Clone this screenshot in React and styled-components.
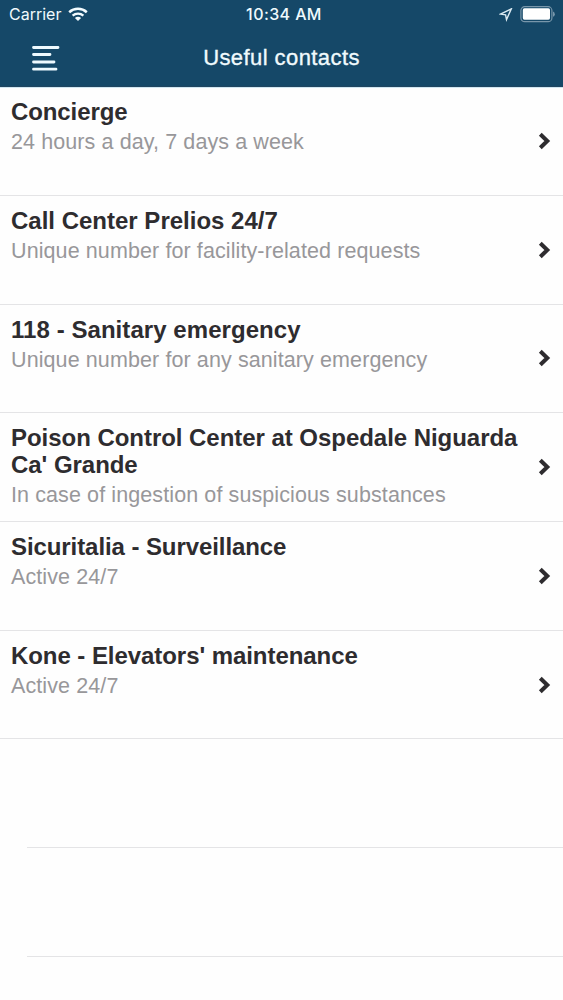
import React from "react";
import styled, { createGlobalStyle } from "styled-components";

const GlobalStyle = createGlobalStyle`
  body {
    margin: 0;
    background: #fefefe;
  }
`;

// ----- Styled Components -----
const Screen = styled.div`
  width: 563px;
  height: 1000px;
  overflow: hidden;
  display: flex;
  flex-direction: column;
  background: #fefefe;
  font-family: "Liberation Sans", Arial, sans-serif;
`;

const Header = styled.header`
  flex: none;
  height: 87px;
  box-sizing: border-box;
  background: #154868;
  border-bottom: 1px solid #204560;
  color: #fff;
`;

const StatusBar = styled.div`
  display: grid;
  grid-template-columns: 1fr auto 1fr;
  align-items: center;
  height: 29px;
  padding: 0 8px 0 9px;
  font-family: Inter, sans-serif;
  font-size: 16px;
  line-height: 29px;
  color: #f0fafd;
`;

const StatusGroup = styled.div`
  display: flex;
  align-items: center;
  gap: 7px;
  justify-content: ${({ $end }) => ($end ? "flex-end" : "flex-start")};
`;

const Clock = styled.span`
  font-weight: 500;
  letter-spacing: 0.4px;
  margin-left: 4px;
`;

const NavBar = styled.div`
  display: grid;
  grid-template-columns: 91px 1fr 91px;
  align-items: center;
  height: 58px;
`;

const MenuButton = styled.button`
  display: flex;
  padding: 0 0 0 32px;
  border: none;
  background: none;
  cursor: pointer;
`;

const NavTitle = styled.h1`
  margin: 0;
  font-size: 22px;
  font-weight: 400;
  line-height: 58px;
  text-align: center;
  letter-spacing: 0.42px;
  color: #f0fafd;
  -webkit-text-stroke: 0.35px #f0fafd;
`;

const List = styled.ul`
  margin: 0;
  padding: 0.25px 0 0;
  list-style: none;
  box-shadow: inset 0 1px 0 #cfe6f1;
`;

const Row = styled.li`
  display: flex;
  align-items: center;
  height: 108.7px;
  box-sizing: border-box;
  margin-left: ${({ $inset }) => ($inset ? "27px" : "0")};
  padding: 0 12px 0 11px;
  border-bottom: 1px solid #e4e4e6;
`;

const Info = styled.div`
  flex: 1;
  align-self: stretch;
  padding-top: 11px;
  white-space: nowrap;
`;

const Name = styled.h2`
  margin: 0;
  font-size: 24px;
  font-weight: 700;
  line-height: 27px;
  letter-spacing: ${({ $tracking }) => $tracking}px;
  white-space: pre-line;
  color: #2e2c2f;
`;

const Note = styled.p`
  margin: 3px 0 0;
  font-size: 21.5px;
  line-height: 28px;
  letter-spacing: 0.1px;
  color: #98979a;
`;

// ----- Icons -----
const WifiIcon = () => (
  <svg width="20" height="15" viewBox="0 0 20 15" fill="none" stroke="#f4fcff">
    <path d="M1.2 5.2C6.2 .7 13.8 .7 18.8 5.2" strokeWidth="2.5" />
    <path d="M4.6 8.6C7.7 5.9 12.3 5.9 15.4 8.6" strokeWidth="2.4" />
    <path d="M10 14L6.9 10.9C8.7 9.4 11.3 9.4 13.1 10.9Z" fill="#f4fcff" stroke="none" />
  </svg>
);

const LocationIcon = () => (
  <svg width="14" height="14" viewBox="0 0 14 14" fill="none" stroke="#dcebf2" strokeWidth="1.4" strokeLinejoin="miter">
    <path d="M12.3 0.9L1.6 6.1L6.6 6.8L7.5 11.6Z" />
  </svg>
);

const BatteryIcon = () => (
  <svg width="35" height="17" viewBox="0 0 35 17">
    <rect x="0.9" y="0.7" width="31" height="15" rx="3.8" fill="none" stroke="#7896aa" strokeWidth="1.2" />
    <rect x="2.8" y="2.3" width="27.2" height="11.4" rx="1.6" fill="#fff" />
    <path d="M33 5.6Q34.8 6.2 34.8 8.2T33 10.8Z" fill="#7896aa" />
  </svg>
);

const MenuIcon = () => (
  <svg width="28" height="27" viewBox="0 0 28 27" stroke="#eefaff" strokeWidth="2.8" strokeLinecap="round">
    <path d="M1.5 2.5H26M1.5 9.5H18M1.5 17H22M1.5 24.2H24" />
  </svg>
);

const ChevronIcon = () => (
  <svg width="13" height="18" viewBox="0 0 13 18" fill="none" stroke="#2e2c2f" strokeWidth="4">
    <path d="M2.3 2.2L9.3 9L2.3 15.8" />
  </svg>
);

// ----- Main Component -----
const contacts = [
  { name: "Concierge", note: "24 hours a day, 7 days a week", tracking: -0.1 },
  { name: "Call Center Prelios 24/7", note: "Unique number for facility-related requests", tracking: 0 },
  { name: "118 - Sanitary emergency", note: "Unique number for any sanitary emergency", tracking: 0.06 },
  { name: "Poison Control Center at Ospedale Niguarda\nCa' Grande", note: "In case of ingestion of suspicious substances", tracking: -0.04 },
  { name: "Sicuritalia - Surveillance", note: "Active 24/7", tracking: -0.08 },
  { name: "Kone - Elevators' maintenance", note: "Active 24/7", tracking: -0.06 },
];

const App = () => {
  return (
    <Screen>
      <GlobalStyle />
      <Header>
        <StatusBar>
          <StatusGroup>
            <span>Carrier</span>
            <WifiIcon />
          </StatusGroup>
          <Clock>10:34 AM</Clock>
          <StatusGroup $end>
            <LocationIcon />
            <BatteryIcon />
          </StatusGroup>
        </StatusBar>
        <NavBar>
          <MenuButton aria-label="Menu">
            <MenuIcon />
          </MenuButton>
          <NavTitle>Useful contacts</NavTitle>
        </NavBar>
      </Header>

      <List>
        {contacts.map((c) => (
          <Row key={c.name}>
            <Info>
              <Name $tracking={c.tracking}>{c.name}</Name>
              <Note>{c.note}</Note>
            </Info>
            <ChevronIcon />
          </Row>
        ))}
        {/* empty cells */}
        <Row $inset />
        <Row $inset />
      </List>
    </Screen>
  );
};

export default App;
